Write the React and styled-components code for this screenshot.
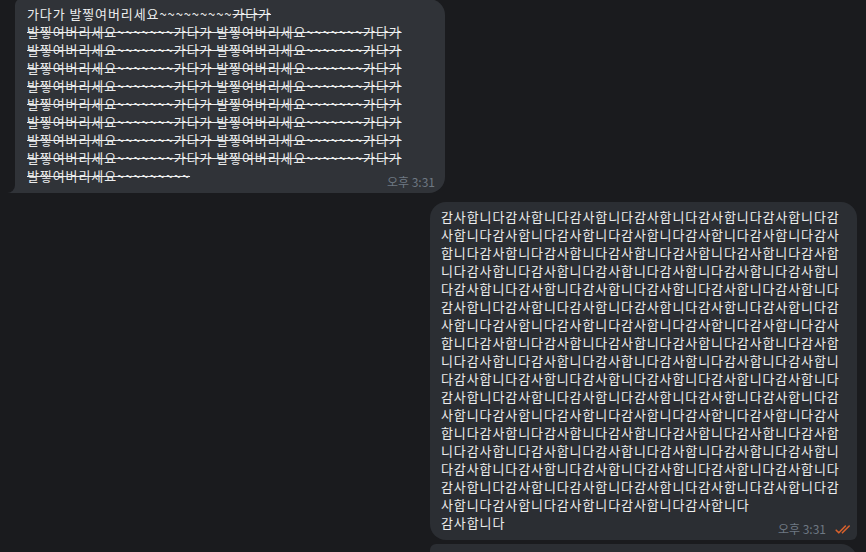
import React from 'react';
import styled, { createGlobalStyle } from 'styled-components';

const GlobalStyle = createGlobalStyle`
  html, body {
    margin: 0;
    padding: 0;
    background: #1a1b1e;
    overflow: hidden;
  }
  body {
    font-family: "Noto Sans CJK KR", "Noto Sans", sans-serif;
  }
`;

const Chat = styled.div`
  display: flex;
  flex-direction: column;
  height: 552px;
  overflow: hidden;
`;

const Row = styled.div`
  display: flex;
  justify-content: ${(p) => (p.$out ? 'flex-end' : 'flex-start')};
  padding: 0 9px 0 15px;
  margin-top: ${(p) => p.$gap || 0}px;
`;

const Bubble = styled.div`
  position: relative;
  box-sizing: border-box;
  width: ${(p) => p.$width}px;
  min-height: ${(p) => p.$minHeight || 0}px;
  padding: 6px ${(p) => (p.$out ? 5 : 10)}px 4px ${(p) => (p.$out ? 11 : 12)}px;
  background: ${(p) => (p.$out ? '#2b2e33' : '#303338')};
  border-radius: ${(p) => p.$radius};
  color: #eceded;
  font-size: 13px;
  line-height: 18px;

  ${(p) =>
    p.$tail &&
    `
    &::before {
      content: '';
      position: absolute;
      left: -8px;
      bottom: 0;
      width: 8px;
      height: 11px;
      background: #303338;
    }
    &::after {
      content: '';
      position: absolute;
      left: -8px;
      bottom: 0;
      width: 8px;
      height: 11px;
      background: #1a1b1e;
      border-bottom-right-radius: 9px;
    }
  `}
`;

const Text = styled.div`
  white-space: ${(p) => (p.$pre ? 'pre' : 'pre-wrap')};
  word-break: break-all;
  letter-spacing: 0.9px;
`;

const Strike = styled.span`
  text-decoration: line-through;
  text-decoration-thickness: 1px;
`;

const Meta = styled.div`
  display: flex;
  align-items: center;
  gap: 9px;
  width: fit-content;
  margin: -10px 0 0 auto;
  height: 14px;
  font-size: 12px;
  line-height: 14px;
  color: #6e7883;
`;

const Check = () => (
  <svg width="17" height="11" viewBox="0 0 17 11">
    <path
      d="M1.2 6.2 L3.8 8.8 L10.4 2 M7.4 8.8 L14.2 2"
      stroke="#d8612d"
      strokeWidth="1.6"
      fill="none"
      strokeLinecap="round"
      strokeLinejoin="round"
    />
  </svg>
);

const longTilde = '~'.repeat(9);
const shortTilde = '~'.repeat(7);
const strikeLine = `발찧여버리세요${shortTilde}가다가 발찧여버리세요${shortTilde}가다가`;
const struck =
  '가다가\n' + Array(8).fill(strikeLine).join('\n') + `\n발찧여버리세요${longTilde}`;

const thanks = '감사합니다'.repeat(104) + '\n감사합니다';

export default function App() {
  return (
    <>
      <GlobalStyle />
      <Chat>
        <Row $gap={-1}>
          <Bubble $width={430} $radius="6px 16px 16px 0" $tail>
            <Text $pre>
              {`가다가 발찧여버리세요${longTilde}`}
              <Strike>{struck}</Strike>
            </Text>
            <Meta>오후 3:31</Meta>
          </Bubble>
        </Row>
        <Row $out $gap={9}>
          <Bubble $out $width={427} $radius="16px 16px 6px 16px">
            <Text>{thanks}</Text>
            <Meta>
              오후 3:31
              <Check />
            </Meta>
          </Bubble>
        </Row>
        <Row $out $gap={4}>
          <Bubble $out $width={427} $minHeight={60} $radius="6px 16px 6px 16px" />
        </Row>
      </Chat>
    </>
  );
}
